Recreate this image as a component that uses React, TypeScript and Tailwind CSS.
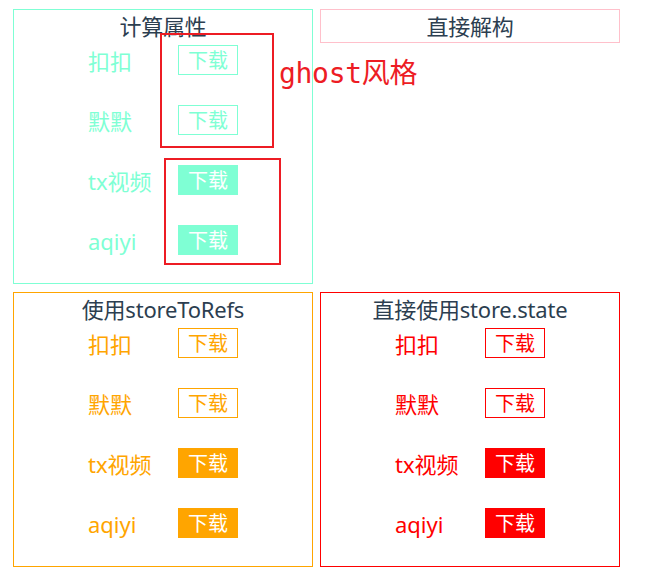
import React from "react";

type Theme = {
  border: string;
  text: string;
  ghost: string;
  solid: string;
};

const themes: Record<string, Theme> = {
  aqua: {
    border: "border-[#7fffd4]",
    text: "text-[#7fffd4]",
    ghost: "border border-[#7fffd4] text-[#7fffd4] bg-white",
    solid: "bg-[#7fffd4] text-white",
  },
  orange: {
    border: "border-[#ffa500]",
    text: "text-[#ffa500]",
    ghost: "border border-[#ffa500] text-[#ffa500] bg-white",
    solid: "bg-[#ffa500] text-white",
  },
  red: {
    border: "border-[#ff0000]",
    text: "text-[#ff0000]",
    ghost: "border border-[#ff0000] text-[#ff0000] bg-white",
    solid: "bg-[#ff0000] text-white",
  },
};

const items = [
  { name: "扣扣", ghost: true },
  { name: "默默", ghost: true },
  { name: "tx视频", ghost: false },
  { name: "aqiyi", ghost: false },
];

function Title({ children }: { children: React.ReactNode }) {
  return (
    <div className="h-[32px] leading-[32px] text-center text-[22px] tracking-[-0.2px] text-[#2c3e50] whitespace-nowrap">
      {children}
    </div>
  );
}

function Card({ title, theme }: { title: string; theme: Theme }) {
  return (
    <div className={`w-[300px] border ${theme.border} pb-[28px]`}>
      <Title>{title}</Title>
      <div className="mt-[3px] flex flex-col gap-[30px]">
        {items.map((it) => (
          <div key={it.name} className="flex items-center justify-center h-[30px]">
            <div className={`w-[90px] text-[22px] leading-[30px] pt-[1px] ${theme.text} whitespace-nowrap`}>
              {it.name}
            </div>
            <div
              className={`w-[60px] h-[30px] flex items-center justify-center text-[20px] leading-[20px] pt-[2px] ${
                it.ghost ? theme.ghost : theme.solid
              }`}
            >
              下载
            </div>
          </div>
        ))}
      </div>
    </div>
  );
}

export default function App() {
  return (
    <div
      className="relative w-[663px] h-[577px] bg-white pt-[9px] pl-[13px]"
      style={{ fontFamily: '"Noto Sans", "Noto Sans CJK SC", sans-serif' }}
    >
      <div className="flex flex-col gap-[8px]">
        <div className="flex items-start gap-[7px]">
          <Card title="计算属性" theme={themes.aqua} />
          <div className="w-[300px] border border-[#ffc0cb]">
            <Title>直接解构</Title>
          </div>
        </div>
        <div className="flex items-start gap-[7px]">
          <Card title="使用storeToRefs" theme={themes.orange} />
          <Card title="直接使用store.state" theme={themes.red} />
        </div>
      </div>

      {/* annotations */}
      <div className="absolute left-[160px] top-[33px] w-[114px] h-[115px] border-2 border-[#ed1c24]" />
      <div className="absolute left-[164px] top-[158px] w-[117px] h-[107px] border-2 border-[#ed1c24]" />
      <div
        className="absolute left-[279px] top-[54px] text-[28px] leading-[40px] tracking-[-0.3px] text-[#ed1c24] whitespace-nowrap"
        style={{ fontFamily: '"DejaVu Sans Mono", "Noto Sans CJK SC", monospace' }}
      >
        ghost风格
      </div>
    </div>
  );
}
